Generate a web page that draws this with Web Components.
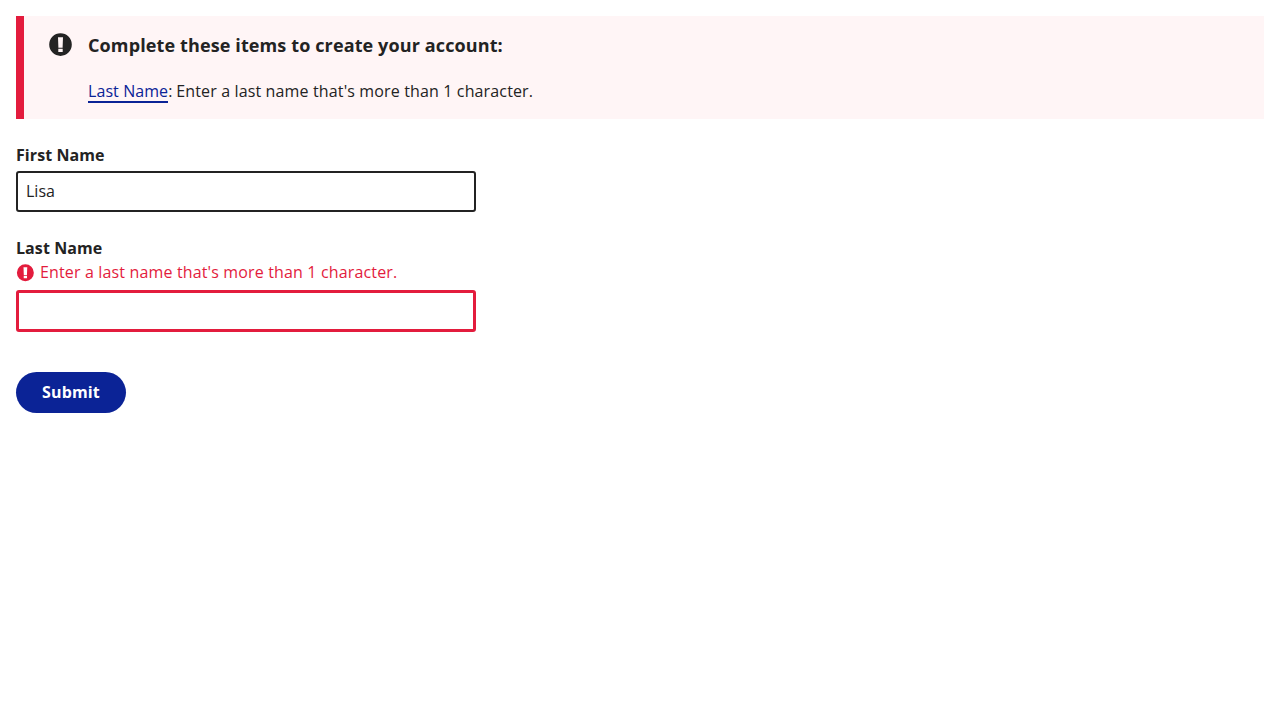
<!DOCTYPE html>
<html lang="en">
<head>
<meta charset="utf-8">
<title>Create account</title>
<style>
body { margin: 0; padding: 16px; background: #fff; color: #232323; font: 16px/24px "Open Sans", sans-serif; }
</style>
</head>
<body>
<account-form></account-form>
<script>
const define = (name, html) => {
  const t = document.createElement('template');
  t.innerHTML = html;
  customElements.define(name, class extends HTMLElement {
    constructor() {
      super();
      this.attachShadow({ mode: 'open' }).append(t.content.cloneNode(true));
    }
  });
};

define('error-icon', `
<style>
:host { display: block; flex: none; }
svg { display: block; width: 100%; height: 100%; }
</style>
<svg viewBox="0 0 24 24" aria-hidden="true"><path fill="currentColor" fill-rule="evenodd" d="M12.5 .3a11.3 11.3 0 1 0 0 22.6A11.3 11.3 0 0 0 12.5 .3zM10 4.2h5l-.4 10.6h-4.2zM10.3 15.8h4.4v3.2h-4.4z"/></svg>`);

define('error-summary', `
<style>
:host { display: flex; box-sizing: border-box; height: 103px; border-left: 8px solid #e31c3d; background: #fff5f6; padding: 17px 24px 0 24px; gap: 16px; }
error-icon { width: 24px; height: 24px; }
h2 { margin: 0 0 21px; font-size: 18px; line-height: 25px; font-weight: 700; letter-spacing: .12px; }
p { margin: 0; letter-spacing: .14px; }
a { display: inline-block; line-height: 20px; letter-spacing: .08px; color: #0b2396; text-decoration: none; border-bottom: 2px solid #0b2396; }
.colon { letter-spacing: -.15px; }
</style>
<error-icon></error-icon>
<div><h2><slot name="heading"></slot></h2><p><a href="#last"><slot name="field"></slot></a><span class="colon">: </span><slot></slot></p></div>`);

define('text-field', `
<style>
:host { display: block; width: 460px; }
label { display: block; font-weight: 700; margin-bottom: 4px; letter-spacing: .08px; }
.box { box-sizing: border-box; height: 41px; border: 2px solid #232323; border-radius: 3px; padding: 6px 8px; background: #fff; }
.error { display: none; align-items: center; gap: 6px; color: #e31c3d; margin-bottom: 6px; letter-spacing: .15px; }
error-icon { width: 18px; height: 18px; margin: 2px 0 0; }
:host([invalid]) label { margin-bottom: 0; }
:host([invalid]) .error { display: flex; }
:host([invalid]) .box { height: 42px; border: 3px solid #e31c3d; }
</style>
<label><slot name="label"></slot></label>
<div class="error"><error-icon></error-icon><span><slot name="error"></slot></span></div>
<div class="box" role="textbox"><slot></slot></div>`);

define('pill-button', `
<style>
:host { display: block; }
button { display: block; box-sizing: border-box; width: 110px; height: 41px; padding: 0 0 1px; border: 0; border-radius: 21px; background: #0b2396; color: #fff; font: 700 16px/24px "Open Sans", sans-serif; letter-spacing: .15px; }
</style>
<button type="button"><slot></slot></button>`);

define('account-form', `
<style>
:host { display: flex; flex-direction: column; }
.first { margin-top: 24px; }
.last { margin-top: 24px; }
pill-button { margin-top: 40px; }
</style>
<error-summary><span slot="heading">Complete these items to create your account:</span><span slot="field">Last Name</span>Enter a last name that's more than 1 character.</error-summary>
<text-field class="first"><span slot="label">First Name</span>Lisa</text-field>
<text-field class="last" invalid><span slot="label">Last Name</span><span slot="error">Enter a last name that's more than 1 character.</span></text-field>
<pill-button>Submit</pill-button>`);
</script>
</body>
</html>
